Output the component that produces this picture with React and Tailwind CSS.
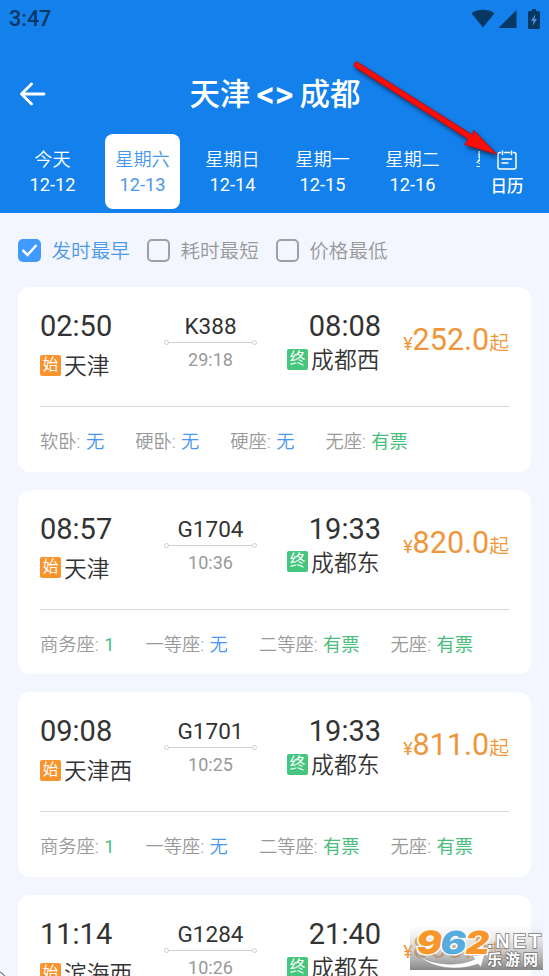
import React, { useState } from 'react';
import clsx from 'clsx';

const days = [
  { label: '今天', date: '12-12' },
  { label: '星期六', date: '12-13' },
  { label: '星期日', date: '12-14' },
  { label: '星期一', date: '12-15' },
  { label: '星期二', date: '12-16' },
  { label: '星期三', date: '12-17' },
];

const filters = ['发时最早', '耗时最短', '价格最低'];

const trains = [
  {
    no: 'K388', depart: '02:50', arrive: '08:08', from: '天津', to: '成都西', duration: '29:18', price: '252.0',
    seats: [['软卧', '无'], ['硬卧', '无'], ['硬座', '无'], ['无座', '有票']],
  },
  {
    no: 'G1704', depart: '08:57', arrive: '19:33', from: '天津', to: '成都东', duration: '10:36', price: '820.0',
    seats: [['商务座', '1'], ['一等座', '无'], ['二等座', '有票'], ['无座', '有票']],
  },
  {
    no: 'G1701', depart: '09:08', arrive: '19:33', from: '天津西', to: '成都东', duration: '10:25', price: '811.0',
    seats: [['商务座', '1'], ['一等座', '无'], ['二等座', '有票'], ['无座', '有票']],
  },
  {
    no: 'G1284', depart: '11:14', arrive: '21:40', from: '滨海西', to: '成都东', duration: '10:26', price: '803.5',
    seats: [['商务座', '1'], ['一等座', '无'], ['二等座', '有票'], ['无座', '有票']],
  },
];

function StatusBar() {
  return (
    <div className="flex h-[38px] items-center justify-between pl-[9px] pr-[9px] text-[#073763]">
      <span className="text-[21.500px] font-medium leading-[38px]">3:47</span>
      <div className="flex items-center">
        <svg width="24" height="20" viewBox="0 0 24 20" fill="currentColor">
          <path d="M0.5 4.2C7-0.3 17-0.3 23.5 4.2L12 18.6Z" />
        </svg>
        <svg width="19" height="20" viewBox="0 0 19 20" className="ml-[3px]" fill="currentColor">
          <path d="M18.5 1V19H0.5Z" />
        </svg>
        <svg width="12" height="20" viewBox="0 0 12 20" className="ml-[11px]" fill="currentColor">
          <path d="M4 0H8V2H10.5Q12 2 12 3.500V18.500Q12 20 10.500 20H1.500Q0 20 0 18.500V3.500Q0 2 1.500 2H4Z" />
          <path d="M7.500 5L3 12H5.500L4.500 17L9 10H6.500Z" fill="#4d93d8" />
        </svg>
      </div>
    </div>
  );
}

function Header() {
  const [active, setActive] = useState(1);

  return (
    <header className="h-[213px] bg-[#1380ec] text-white">
      <StatusBar />
      <div className="grid h-[96px] grid-cols-[60px_1fr_60px] items-center pt-[15px]">
        <button className="pl-5">
          <svg width="26" height="24" viewBox="0 0 26 24" fill="none" stroke="currentColor" strokeWidth="2.800" strokeLinecap="round" strokeLinejoin="round">
            <path d="M11.500 2L1.500 12L11.500 22M1.500 12H24" />
          </svg>
        </button>
        <h1 className="flex items-center justify-center gap-[6px] pt-0.5 pl-px text-[30.500px] font-medium leading-10 whitespace-nowrap">
          <span>天津</span>
          <span className="text-[36px]">&lt;&gt;</span>
          <span>成都</span>
        </h1>
      </div>
      <div className="flex">
        <div className="flex w-[480px] shrink-0 gap-[15px] overflow-hidden pl-[15px]">
          {days.map((day, i) => (
            <button
              key={day.date}
              onClick={() => setActive(i)}
              className={clsx(
                'h-[75px] w-[75px] shrink-0 rounded-lg text-[18.200px] leading-[25px] whitespace-nowrap',
                i === active ? 'bg-white text-[#4a98ee]' : 'text-white'
              )}
            >
              <div className="font-[350]">{day.label}</div>
              <div>{day.date}</div>
            </button>
          ))}
        </div>
        <button className="flex w-[54px] flex-col items-center pt-4">
          <svg width="20" height="20" viewBox="0 0 20 20" fill="none" stroke="currentColor" strokeWidth="1.500" strokeLinecap="round">
            <path d="M3.500 2.500H3Q1 2.500 1 4.500V17Q1 19 3 19H17Q19 19 19 17V4.500Q19 2.500 17 2.500H16.500M7.500 2.500H12.500M5.500 1V4.500M14.500 1V4.500M5 9H14.500M5 13H11" />
          </svg>
          <span className="mt-[5px] text-[16.500px] font-medium leading-6">日历</span>
        </button>
      </div>
    </header>
  );
}

function Filters() {
  const [selected, setSelected] = useState(0);

  return (
    <div className="flex h-[74px] items-center pl-[18px]">
      {filters.map((name, i) => (
        <button key={name} onClick={() => setSelected(i)} className="mr-[17px] flex items-center">
          {i === selected ? (
            <span className="flex h-[23px] w-[23px] items-center justify-center rounded-[5px] bg-[#409aff]">
              <svg width="17" height="15" viewBox="0 0 17 15" fill="none" stroke="white" strokeWidth="2.500">
                <path d="M1.500 7L6.500 12L15.500 2" />
              </svg>
            </span>
          ) : (
            <span className="h-[23px] w-[23px] rounded-[5px] border-2 border-[#a0a0a0]" />
          )}
          <span className={clsx('ml-[10.500px] pt-[3px] text-[19.600px] font-[350] leading-7', i === selected ? 'text-[#4a98ee]' : 'text-[#999]')}>{name}</span>
        </button>
      ))}
    </div>
  );
}

function Badge({ children, className }) {
  return (
    <span className={clsx('mb-[3px] flex h-[21px] w-[21px] shrink-0 items-center justify-center rounded-[2px] text-[15.500px] font-normal leading-[21px] text-white', className)}>
      {children}
    </span>
  );
}

function TrainCard({ train }) {
  return (
    <article className="h-[184.500px] shrink-0 rounded-xl bg-white px-[22px]">
      <div className="flex h-[120px] border-b-[1.500px] border-[#dcdcdc] text-[#333]">
        <div className="w-[118px] pt-[22px]">
          <div className="text-[29px] leading-[34px]">{train.depart}</div>
          <div className="mt-[7px] flex items-center gap-[3px] text-[22.800px] font-[350] leading-8 whitespace-nowrap">
            <Badge className="bg-[#f8932d]">始</Badge>
            <span className="pt-px">{train.from}</span>
          </div>
        </div>
        <div className="w-[105px] pt-[25px] text-center">
          <div className="text-[22.500px] leading-7">{train.no}</div>
          <div className="mx-auto flex w-[93px] items-center">
            <i className="h-[5px] w-[5px] rounded-full border border-[#d0d0d0]" />
            <i className="h-px flex-1 bg-[#d0d0d0]" />
            <i className="h-[5px] w-[5px] rounded-full border border-[#d0d0d0]" />
          </div>
          <div className="mt-[3px] text-[18px] leading-6 text-[#999]">{train.duration}</div>
        </div>
        <div className="flex w-[118px] flex-col items-end pt-[22px]">
          <div className="text-[29px] leading-[34px]">{train.arrive}</div>
          <div className="mt-px mr-[1.500px] flex items-center gap-[3px] text-[22.800px] font-[350] leading-8 whitespace-nowrap">
            <Badge className="bg-[#45c67e]">终</Badge>
            <span className="pt-px">{train.to}</span>
          </div>
        </div>
        <div className="flex flex-1 items-baseline justify-end pt-[33px] leading-[40px] text-[#f0963a]">
          <span className="text-[18px]">¥</span>
          <span className="text-[30.500px]">{train.price}</span>
          <span className="text-[19.800px] font-[350]">起</span>
        </div>
      </div>
      <div className="flex gap-[31px] pt-[21px] text-[18.300px] leading-[28px] whitespace-nowrap text-[#999]">
        {train.seats.map(([name, left]) => (
          <span key={name} className="font-[350]">
            {name}:{' '}
            <span className={clsx('ml-px', left === '无' ? 'text-[#4a98ee]' : 'font-normal text-[#4bbd7c]')}>{left}</span>
          </span>
        ))}
      </div>
    </article>
  );
}

// red pointer lying over the header
function Pointer() {
  return (
    <svg className="pointer-events-none absolute top-[55px] left-[345px] drop-shadow-[2px_3px_2px_rgba(0,0,0,0.5)]" width="160" height="110" viewBox="345 55 160 110">
      <path d="M355 62.500Q352.500 66 355.500 67.500L468 139L464.500 144.500L497 154.500L473.500 130L472.500 135L358 62.500Q356.500 61 355 62.500Z" fill="#fb0d08" stroke="#a90f17" strokeWidth="0.800" />
    </svg>
  );
}

function Watermark() {
  return (
    <svg className="pointer-events-none absolute top-[927px] left-[410px]" width="133" height="43" viewBox="0 0 133 43">
      <defs>
        <linearGradient id="shade" x1="0" y1="0" x2="0" y2="1">
          <stop offset="0" stopColor="#d8d8d8" stopOpacity="0.100" />
          <stop offset="1" stopColor="#808080" stopOpacity="0.950" />
        </linearGradient>
      </defs>
      <rect width="133" height="43" fill="url(#shade)" />
      <path d="M6 27C22 39 49 40 65 32L62 29L75 27L71 40L68 37C47 45 20 41 6 27Z" fill="#fff" stroke="#888" strokeWidth="0.500" />
      <g className="font-['Inter'] font-black" transform="translate(5 26.500) skewX(-9)" fontSize="32" stroke="#fff" strokeWidth="2.500" paintOrder="stroke" strokeLinejoin="round">
        <text textLength="26" lengthAdjust="spacingAndGlyphs" fill="#f7962b">9</text>
        <text x="24" textLength="26" lengthAdjust="spacingAndGlyphs" fill="#58abdf">6</text>
        <text x="49" textLength="24" lengthAdjust="spacingAndGlyphs" fill="#f7962b">2</text>
      </g>
      <g fill="#fff" stroke="#777" strokeWidth="1.500" paintOrder="stroke">
        <text className="font-['Liberation_Sans'] font-bold" x="77" y="21" fontSize="20" textLength="54" lengthAdjust="spacing">.NET</text>
        <text className="font-['Noto_Sans_CJK_SC'] font-bold" x="77" y="38" fontSize="15" textLength="51">乐游网</text>
      </g>
    </svg>
  );
}

export default function App() {
  return (
    <div className="relative h-[976px] w-[549px] overflow-hidden bg-[#f3f6ff] font-['Roboto','Noto_Sans_CJK_SC',sans-serif]">
      <Header />
      <Filters />
      <main className="flex flex-col gap-[18.200px] px-[18px]">
        {trains.map((train) => (
          <TrainCard key={train.no} train={train} />
        ))}
      </main>
      <Pointer />
      <Watermark />
      <svg className="pointer-events-none absolute bottom-0 left-0" width="5" height="5" viewBox="0 0 5 5">
        <path d="M0 0.500L4.500 5H0Z" fill="white" />
        <path d="M0 0.500L4.500 5" stroke="#222" />
      </svg>
    </div>
  );
}
